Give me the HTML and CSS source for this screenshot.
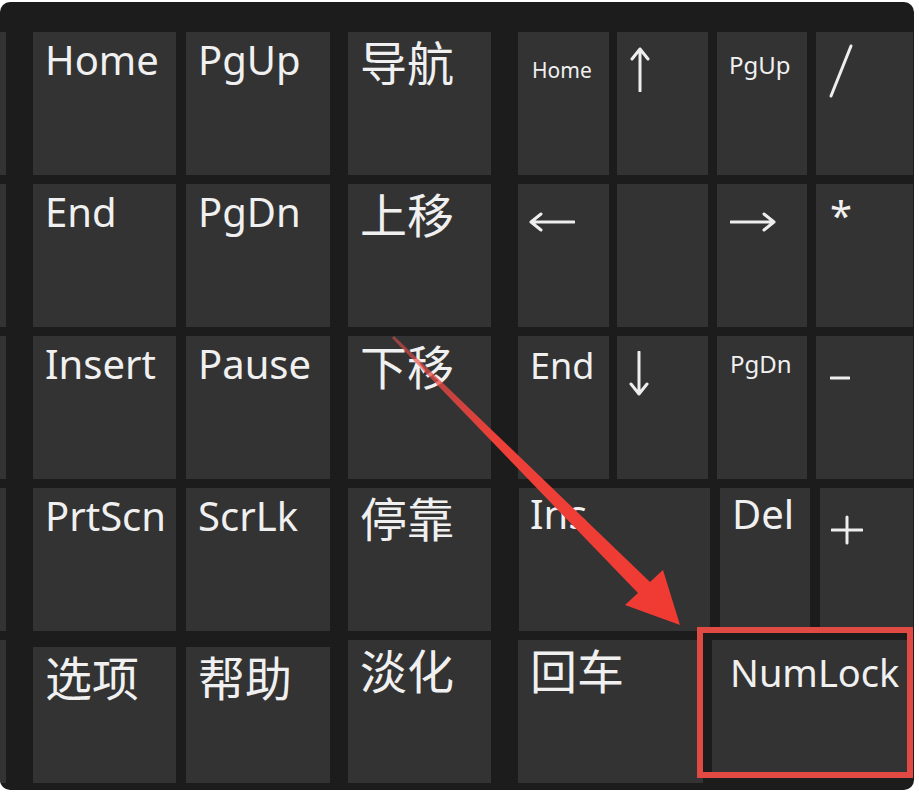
FILE: index.html
```html
<!DOCTYPE html>
<html lang="zh-CN">
<head>
  <meta charset="UTF-8" />
  <meta name="viewport" content="width=device-width, initial-scale=1.0"/>
  <title>屏幕键盘 NumLock</title>
  <link rel="stylesheet" href="styles.css">
</head>
<body>

  <!-- On-screen keyboard, right part -->
  <div class="board">

    <div class="row">
      <div class="key cut"></div>
      <div class="key c1">Home</div>
      <div class="key c2">PgUp</div>
      <div class="key c3 zh">导航</div>
      <div class="key n1 small home">Home</div>
      <div class="key n2 ico">
        <svg class="up" width="24" height="46" viewBox="0 0 24 46"><path d="M12 3V45M4 13L12 3L20 13"/></svg>
      </div>
      <div class="key n3 small pgup">PgUp</div>
      <div class="key n4 ico">
        <svg class="slash" width="30" height="56" viewBox="0 0 30 56"><path d="M24 2L4 52"/></svg>
      </div>
    </div>

    <div class="row">
      <div class="key cut"></div>
      <div class="key c1">End</div>
      <div class="key c2">PgDn</div>
      <div class="key c3 zh">上移</div>
      <div class="key n1 ico">
        <svg class="left" width="46" height="24" viewBox="0 0 46 24"><path d="M2 12H45M12 4L2 12L12 20"/></svg>
      </div>
      <div class="key n2"></div>
      <div class="key n3 ico">
        <svg class="right" width="46" height="24" viewBox="0 0 46 24"><path d="M1 12H44M34 4L44 12L34 20"/></svg>
      </div>
      <div class="key n4 star">*</div>
    </div>

    <div class="row">
      <div class="key cut"></div>
      <div class="key c1">Insert</div>
      <div class="key c2">Pause</div>
      <div class="key c3 zh">下移</div>
      <div class="key n1 mid">End</div>
      <div class="key n2 ico">
        <svg class="down" width="24" height="46" viewBox="0 0 24 46"><path d="M12 1V43M4 33L12 43L20 33"/></svg>
      </div>
      <div class="key n3 small pgdn">PgDn</div>
      <div class="key n4 ico">
        <svg class="minus" width="20" height="8" viewBox="0 0 20 8"><path d="M1 4H19"/></svg>
      </div>
    </div>

    <div class="row">
      <div class="key cut"></div>
      <div class="key c1">PrtScn</div>
      <div class="key c2">ScrLk</div>
      <div class="key c3 zh">停靠</div>
      <div class="key ins">Ins</div>
      <div class="key del">Del</div>
      <div class="key plus ico">
        <svg class="cross" width="32" height="32" viewBox="0 0 32 32"><path d="M1 16H31M16 3V29"/></svg>
      </div>
    </div>

    <div class="row last">
      <div class="key cut"></div>
      <div class="key c1 zh">选项</div>
      <div class="key c2 zh">帮助</div>
      <div class="key c3 zh">淡化</div>
      <div class="key enter zh">回车</div>
      <div class="key numlock">NumLock<div class="mark"></div></div>
    </div>

  </div>

  <!-- red pointer arrow -->
  <svg class="pointer" width="919" height="792" viewBox="0 0 919 792">
    <defs>
      <linearGradient id="fade" x1="393" y1="337" x2="680" y2="625" gradientUnits="userSpaceOnUse">
        <stop offset="0" stop-color="#e6504c" stop-opacity="0.55"/>
        <stop offset="0.35" stop-color="#ec4039"/>
        <stop offset="1" stop-color="#f03a32"/>
      </linearGradient>
    </defs>
    <polygon points="392,338 394,336 650,582 663,570 680,625 625,605 638,593" fill="url(#fade)"/>
  </svg>

</body>
</html>
```

FILE: styles.css
```css
body {
  margin: 0;
  background: #ffffff;
  font-family: "Noto Sans", "Noto Sans CJK SC", sans-serif;
  position: relative;
  width: 919px;
  height: 792px;
  overflow: hidden;
}

.board {
  margin-top: 2px;
  width: 914px;
  height: 788px;
  box-sizing: border-box;
  padding-top: 30px;
  background: #1c1c1c;
  border-radius: 10px;
  display: flex;
  flex-direction: column;
  gap: 9px;
  overflow: hidden;
}

.row {
  display: flex;
  height: 143px;
}

.key {
  position: relative;
  box-sizing: border-box;
  background: #333333;
  color: #f0f0f0;
  font-size: 40px;
  line-height: 1;
  padding: 8px 12px 0;
  white-space: nowrap;
}

.key.zh {
  font-family: "Noto Sans CJK SC", sans-serif;
  font-size: 47px;
  padding-top: 5px;
}

/* column widths and gaps */
.cut { width: 6px; padding: 0; }
.c1 { margin-left: 27px; width: 143px; }
.c2 { margin-left: 10px; width: 144px; }
.c3 { margin-left: 18px; width: 143px; }
.n1 { margin-left: 27px; width: 91px; }
.n2 { margin-left: 8px; width: 91px; }
.n3 { margin-left: 9px; width: 90px; }
.n4 { margin-left: 9px; width: 97px; }

.ins { margin-left: 28px; width: 191px; padding: 6px 11px 0; }
.del { margin-left: 10px; width: 90px; padding-top: 6px; }
.plus { margin-left: 10px; width: 93px; }

.enter { margin-left: 27px; width: 185px; }
.numlock {
  margin-left: 9px;
  width: 195px;
  height: 132px;
  font-size: 38px;
  padding: 13px 18px 0;
}

.last .c1,
.last .c2 { margin-top: 7px; }

/* numpad label sizes */
.small { font-size: 24px; }
.small.home { font-size: 21px; padding: 28px 14px 0; }
.small.pgup { padding-top: 21px; }
.small.pgdn { padding: 16px 13px 0; }
.mid { font-size: 36px; padding-top: 12px; }
.star { padding: 11px 14px 0; }

/* drawn glyphs */
.ico { padding: 0; }
.ico svg {
  display: block;
  fill: none;
  stroke: #eeeeee;
  stroke-width: 3;
  stroke-linecap: round;
  stroke-linejoin: round;
}
.up { margin: 14px 0 0 11px; }
.down { margin: 15px 0 0 10px; }
.left { margin: 26px 0 0 11px; }
.right { margin: 26px 0 0 13px; }
.slash { margin: 12px 0 0 11px; stroke-width: 3.5; }
.minus { margin: 38px 0 0 14px; stroke-width: 4; }
.cross { margin: 26px 0 0 11px; stroke-width: 3.5; }

/* highlight box around NumLock */
.mark {
  position: absolute;
  left: -15px;
  top: -13px;
  width: 216px;
  height: 151px;
  box-sizing: border-box;
  border: 6px solid #e04a42;
}

.pointer {
  position: absolute;
  left: 0;
  top: 0;
  pointer-events: none;
}
```
